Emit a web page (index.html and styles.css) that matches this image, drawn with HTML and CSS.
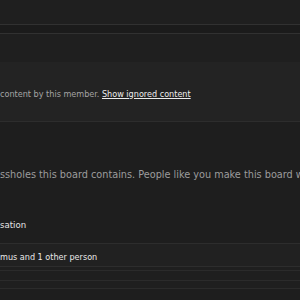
FILE: index.html
```html
<!DOCTYPE html>
<html lang="en">
<head>
  <meta charset="UTF-8">
  <title>Thread</title>
  <link rel="stylesheet" href="styles.css">
</head>
<body>
  <div class="page">
    <div class="prev-post"></div>
    <div class="prev-footer"></div>
    <div class="spacer"></div>

    <div class="ignored">
      <p>content by this member. <a href="#">Show ignored content</a></p>
    </div>

    <div class="message">
      <p class="body">ssholes this board contains. People like you make this board worse.</p>
      <p class="action">sation</p>
    </div>

    <div class="likes">
      <p>mus and 1 other person</p>
    </div>
    <div class="rows">
      <div class="row"></div>
      <div class="row tall"></div>
      <div class="row mid"></div>
    </div>
  </div>
</body>
</html>
```

FILE: styles.css
```css
body {
  margin: 0;
  background: #1e1e1e;
  font-family: "DejaVu Sans Condensed", "DejaVu Sans", Verdana, sans-serif;
  font-stretch: condensed;
  font-size: 9px;
  overflow: hidden;
}
p {
  margin: 0;
  white-space: nowrap;
}
.prev-post {
  height: 24px;
  background: #1f1f1f;
}
.prev-footer {
  height: 8px;
  background: #1b1b1b;
  border-top: 1px solid #313131;
  border-bottom: 1px solid #313131;
}
.spacer {
  height: 28px;
  background: #1f1f1f;
}
.ignored {
  height: 55px;
  padding-top: 4px;
  background: #232323;
  border-bottom: 1px solid #2d2d2d;
  color: #a3a3a3;
  display: flex;
  align-items: center;
}
.ignored a {
  color: #ececec;
  text-decoration: underline;
}
.message {
  height: 121px;
  background: #1e1e1e;
  border-bottom: 1px solid #2d2d2d;
  display: flex;
  flex-direction: column;
}
.message .body {
  color: #9c9c9c;
  font-size: 10.8px;
  margin-top: 46px;
}
.message .action {
  color: #e4e4e4;
  font-size: 9.5px;
  margin-top: 38px;
}
.likes {
  height: 19px;
  padding-top: 3px;
  background: #212121;
  color: #e8e8e8;
  display: flex;
  align-items: center;
  border-bottom: 1px solid #2d2d2d;
}
.rows .row {
  height: 3px;
  background: #1f1f1f;
  border-bottom: 1px solid #2b2b2b;
}
.rows .row.tall {
  height: 9px;
}
.rows .row.mid {
  height: 7px;
}
```
